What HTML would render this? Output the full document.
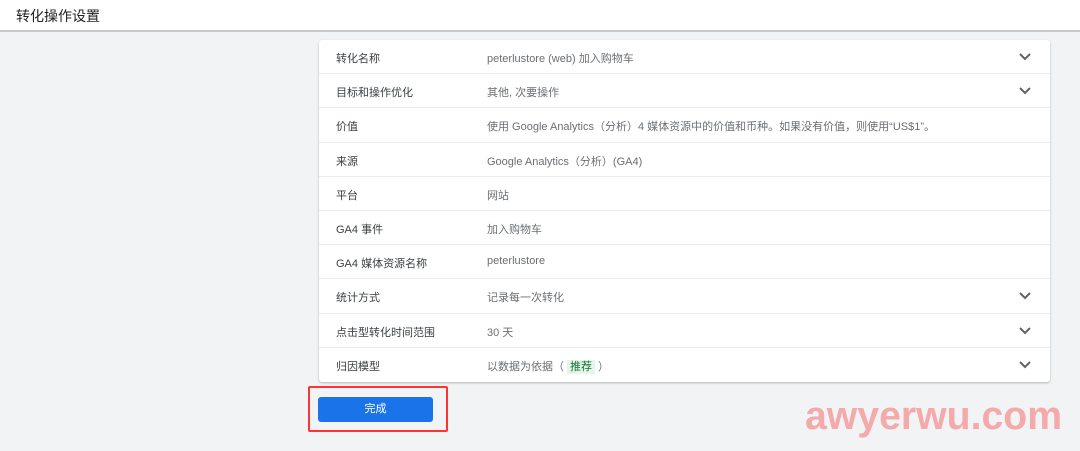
<!DOCTYPE html>
<html><head><meta charset="utf-8"><style>
body{margin:0;width:1080px;height:451px;background:#f1f3f4;font-family:"Liberation Sans","Noto Sans CJK SC",sans-serif;position:relative;overflow:hidden}
.hdr{position:absolute;left:0;top:0;width:1080px;height:30px;background:#fff;border-bottom:2px solid #c8c8c8}
.hdr span{position:absolute;left:16px;top:6px;font-size:14px;color:#202124}
.card{position:absolute;left:319px;top:40px;width:731px;height:342px;background:#fff;border-radius:3px;box-shadow:0 1px 2px rgba(0,0,0,.25)}
.row{height:34.2px;border-bottom:1px solid #ebebeb;box-sizing:border-box;position:relative;font-size:11px}
.row:last-child{border-bottom:none}
.l{position:absolute;left:17px;top:10px;color:#3c4043}
.v{position:absolute;left:168px;top:10px;color:#6b6f73}
.c{position:absolute;right:19px;top:13px}
.tag{background:#e6f4ea;color:#137333;padding:1px 3px;margin:0 3px}
.btn{position:absolute;left:318px;top:397px;width:115px;height:25px;background:#1a73e8;border-radius:3px;color:#fff;font-size:11px;text-align:center;line-height:25px}
.red{position:absolute;left:308px;top:386px;border:2px solid #f33;border-radius:2px;width:136px;height:42px}
.wm{position:absolute;left:805px;top:394px;font-size:40px;font-weight:bold;color:#f4a9ab;font-family:"Liberation Sans",sans-serif;transform-origin:0 0;transform:scaleX(0.98);white-space:nowrap}
</style></head><body>
<div class="hdr"><span>转化操作设置</span></div>
<div class="card">
<div class="row"><span class="l">转化名称</span><span class="v">peterlustore (web) 加入购物车</span><svg class="c" width="12" height="8"><path d="M1 1l5 5 5-5" fill="none" stroke="#5f6368" stroke-width="2"/></svg></div>
<div class="row"><span class="l">目标和操作优化</span><span class="v">其他, 次要操作</span><svg class="c" width="12" height="8"><path d="M1 1l5 5 5-5" fill="none" stroke="#5f6368" stroke-width="2"/></svg></div>
<div class="row"><span class="l">价值</span><span class="v">使用 Google Analytics（分析）4 媒体资源中的价值和币种。如果没有价值，则使用“US$1”。</span></div>
<div class="row"><span class="l">来源</span><span class="v">Google Analytics（分析）(GA4)</span></div>
<div class="row"><span class="l">平台</span><span class="v">网站</span></div>
<div class="row"><span class="l">GA4 事件</span><span class="v">加入购物车</span></div>
<div class="row"><span class="l">GA4 媒体资源名称</span><span class="v">peterlustore</span></div>
<div class="row"><span class="l">统计方式</span><span class="v">记录每一次转化</span><svg class="c" width="12" height="8"><path d="M1 1l5 5 5-5" fill="none" stroke="#5f6368" stroke-width="2"/></svg></div>
<div class="row"><span class="l">点击型转化时间范围</span><span class="v">30 天</span><svg class="c" width="12" height="8"><path d="M1 1l5 5 5-5" fill="none" stroke="#5f6368" stroke-width="2"/></svg></div>
<div class="row"><span class="l">归因模型</span><span class="v">以数据为依据（<span class="tag">推荐</span>）</span><svg class="c" width="12" height="8"><path d="M1 1l5 5 5-5" fill="none" stroke="#5f6368" stroke-width="2"/></svg></div>
</div>
<div class="red"></div>
<div class="btn">完成</div>
<div class="wm">awyerwu.com</div>
</body></html>
